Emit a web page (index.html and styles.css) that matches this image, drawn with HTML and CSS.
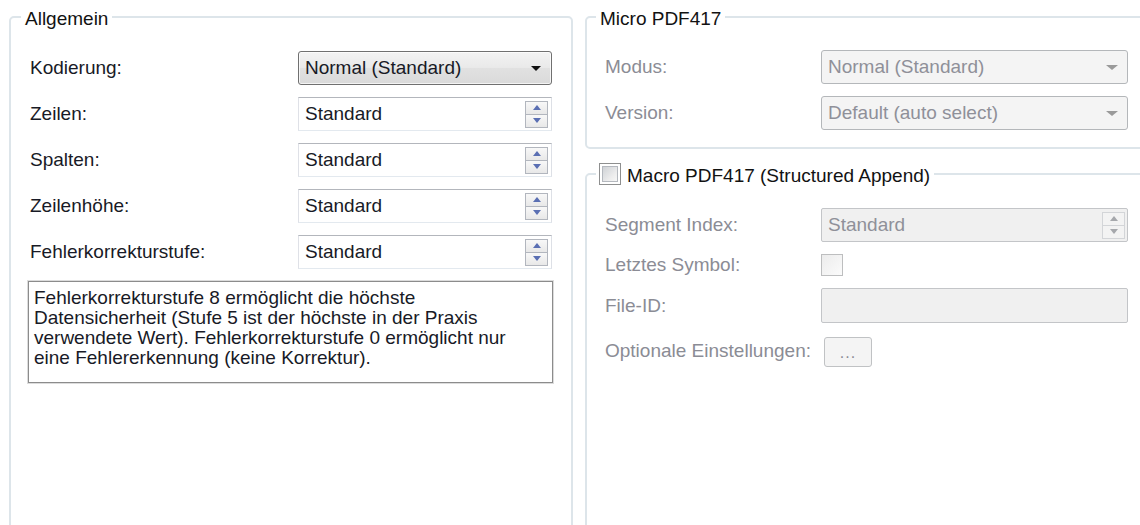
FILE: index.html
```html
<!DOCTYPE html>
<html lang="de">
<head>
<meta charset="utf-8">
<title>PDF417 Einstellungen</title>
<link rel="stylesheet" href="styles.css">
</head>
<body>
<div class="viewport">
<div class="dialog">
  <fieldset class="group general">
    <legend class="group-title">Allgemein</legend>
    <div class="group-body">
      <div class="form">
        <span class="label">Kodierung:</span>
        <div class="combo"><span class="value">Normal (Standard)</span><span class="caret"></span></div>

        <span class="label">Zeilen:</span>
        <div class="spin"><span class="value">Standard</span><span class="spin-btns"><span class="up"></span><span class="down"></span></span></div>

        <span class="label">Spalten:</span>
        <div class="spin"><span class="value">Standard</span><span class="spin-btns"><span class="up"></span><span class="down"></span></span></div>

        <span class="label">Zeilenhöhe:</span>
        <div class="spin"><span class="value">Standard</span><span class="spin-btns"><span class="up"></span><span class="down"></span></span></div>

        <span class="label">Fehlerkorrekturstufe:</span>
        <div class="spin"><span class="value">Standard</span><span class="spin-btns"><span class="up"></span><span class="down"></span></span></div>
      </div>
      <p class="note">Fehlerkorrekturstufe 8 ermöglicht die höchste Datensicherheit (Stufe 5 ist der höchste in der Praxis verwendete Wert). Fehlerkorrekturstufe 0 ermöglicht nur eine Fehlererkennung (keine Korrektur).</p>
    </div>
  </fieldset>

  <div class="side">
    <fieldset class="group micro">
      <legend class="group-title">Micro PDF417</legend>
      <div class="group-body">
        <div class="form form-side">
          <span class="label disabled">Modus:</span>
          <div class="combo is-disabled"><span class="value">Normal (Standard)</span><span class="caret"></span></div>

          <span class="label disabled">Version:</span>
          <div class="combo is-disabled"><span class="value">Default (auto select)</span><span class="caret"></span></div>
        </div>
      </div>
    </fieldset>

    <fieldset class="group macro">
      <legend class="group-title check-title"><span class="check"></span><span class="check-text">Macro PDF417 (Structured Append)</span></legend>
      <div class="group-body">
        <div class="form form-side form-macro">
          <span class="label disabled">Segment Index:</span>
          <div class="spin is-disabled"><span class="value">Standard</span><span class="spin-btns"><span class="up"></span><span class="down"></span></span></div>

          <span class="label disabled">Letztes Symbol:</span>
          <div class="check-cell"><span class="check is-disabled"></span></div>

          <span class="label disabled">File-ID:</span>
          <div class="textbox is-disabled"></div>

          <span class="label disabled">Optionale Einstellungen:</span>
          <div class="button-cell"><span class="dots-button">...</span></div>
        </div>
      </div>
    </fieldset>
  </div>
</div>
</div>
</body>
</html>
```

FILE: styles.css
```css
html, body {
  margin: 0;
  background: #ffffff;
  overflow: hidden;
}

body {
  font-family: "Liberation Sans", Arial, sans-serif;
  font-size: 19px;
  line-height: 20px;
  color: #181a26;
}

/* the window clips the group boxes, which continue below its edge */
.viewport {
  height: 525px;
  overflow: hidden;
}

.dialog {
  display: flex;
  gap: 12px;
  padding-left: 9px;
  height: 570px;
}

/* group boxes */
.group {
  margin: 0;
  padding: 0;
  min-width: 0;
  border: 2px solid #dde5ea;
  border-radius: 5px;
  box-sizing: border-box;
}

.group-title {
  margin-left: 10px;
  padding: 5px 4px 0;
  line-height: 20px;
  color: #121212;
}

.general {
  width: 564px;
  margin-top: 4px;
}

.general .group-body {
  padding: 22px 18px 0 17px;
}

.side {
  flex: 1;
  display: flex;
  flex-direction: column;
  margin-right: -40px;
}

.micro {
  margin-top: 4px;
}

.micro .group-title {
  margin-left: 9px;
}

.micro .group-body {
  padding: 21px 40px 17px 18px;
}

.macro {
  flex: 1;
  margin-top: 13px;
}

.check-title {
  display: flex;
  align-items: center;
  gap: 6px;
  margin-left: 9px;
  padding: 0 4px 0 3px;
}

.check-text {
  padding-top: 4px;
  line-height: 20px;
}

.macro .group-body {
  padding: 22px 40px 0 18px;
}

/* label / control grid */
.form {
  display: grid;
  grid-template-columns: 270px 254px;
  grid-auto-rows: 34px;
  row-gap: 12px;
  align-items: center;
}

.form-side {
  grid-template-columns: 216px 307px;
}

.form-macro {
  grid-auto-rows: auto;
}

.label {
  padding-left: 2px;
  white-space: nowrap;
}

.form-side .label {
  padding-left: 0;
}

.label.disabled {
  color: #8b8c95;
}

/* drop-down */
.combo {
  display: flex;
  align-items: center;
  justify-content: space-between;
  height: 34px;
  box-sizing: border-box;
  padding: 0 10px 0 6px;
  border: 1px solid #707070;
  border-radius: 3px;
  background: linear-gradient(#f3f3f3, #e9e9e9 50%, #e1e1e1 51%, #dadada);
  box-shadow: inset 0 0 0 1px rgba(255, 255, 255, 0.7);
  color: #181a26;
}

.caret {
  width: 0;
  height: 0;
  border-left: 5px solid transparent;
  border-right: 5px solid transparent;
  border-top: 5px solid #111111;
}

.combo.is-disabled {
  border-color: #b4b7ba;
  background: #f4f4f4;
  box-shadow: none;
  color: #8f9099;
  padding-right: 9px;
}

.combo.is-disabled .caret {
  border-left-width: 6px;
  border-right-width: 6px;
  border-top-color: #9a9a9a;
}

/* spin box */
.spin {
  display: flex;
  align-items: center;
  justify-content: space-between;
  height: 34px;
  box-sizing: border-box;
  padding: 0 3px 0 6px;
  border: 1px solid;
  border-color: #b3b6bc #dde0e6 #e3e9ef #dfe1e7;
  background: #ffffff;
}

.spin-btns {
  display: flex;
  flex-direction: column;
  width: 23px;
  height: 27px;
  box-sizing: border-box;
  border: 1px solid #b2b6be;
}

.spin-btns span {
  flex: 1;
  display: flex;
  align-items: center;
  justify-content: center;
  background: linear-gradient(#f8f8f8, #e8e8e8);
}

.spin-btns span + span {
  border-top: 1px solid #b2b6be;
}

.up::before,
.down::before {
  content: "";
  width: 0;
  height: 0;
  border-left: 4px solid transparent;
  border-right: 4px solid transparent;
}

.up::before {
  border-bottom: 5px solid #5a6fb3;
}

.down::before {
  border-top: 5px solid #5a6fb3;
}

.spin.is-disabled {
  border-color: #c3c5c8;
  border-radius: 2px;
  background: #f0f0f0;
  color: #8f9099;
  padding-right: 2px;
}

.spin.is-disabled .spin-btns {
  border-color: #d3d5d8;
}

.spin.is-disabled .spin-btns span {
  background: #f3f3f3;
}

.spin.is-disabled .spin-btns span + span {
  border-top-color: #d3d5d8;
}

.spin.is-disabled .up::before {
  border-bottom-color: #a6a8ac;
}

.spin.is-disabled .down::before {
  border-top-color: #a6a8ac;
}

/* check boxes */
.check {
  display: block;
  width: 22px;
  height: 22px;
  box-sizing: border-box;
  border: 1px solid #8e8f8f;
  background: #ffffff;
  padding: 2px;
  flex: none;
}

.check::before {
  content: "";
  display: block;
  width: 100%;
  height: 100%;
  box-sizing: border-box;
  border: 1px solid #b4b8be;
  background: linear-gradient(135deg, #cfd2d6, #eeeeee 70%, #f6f6f6);
}

.check.is-disabled {
  border-color: #bdbebf;
  padding: 0;
  background: linear-gradient(135deg, #ececec, #fbfbfb);
}

.check.is-disabled::before {
  display: none;
}

.check-cell {
  height: 22px;
}

/* text box */
.textbox {
  height: 35px;
  box-sizing: border-box;
  border: 1px solid #c3c5c8;
  border-radius: 2px;
  background: #f0f0f0;
}

/* small browse button */
.button-cell {
  margin-top: 2px;
}

.dots-button {
  display: flex;
  align-items: center;
  justify-content: center;
  width: 48px;
  height: 30px;
  margin-left: 3px;
  box-sizing: border-box;
  border: 1px solid #c0c2c4;
  border-radius: 3px;
  background: #f4f4f4;
  color: #8b8c95;
  font-size: 16px;
  letter-spacing: 1px;
  padding-top: 2px;
}

/* description text */
.note {
  margin: 12px 0 0;
  height: 102px;
  box-sizing: border-box;
  padding: 6px 18px 0 5px;
  border: 1px solid #8c8c8c;
  box-shadow: 0 0 0 1px #dcdcdc;
  color: #181a26;
}
```
